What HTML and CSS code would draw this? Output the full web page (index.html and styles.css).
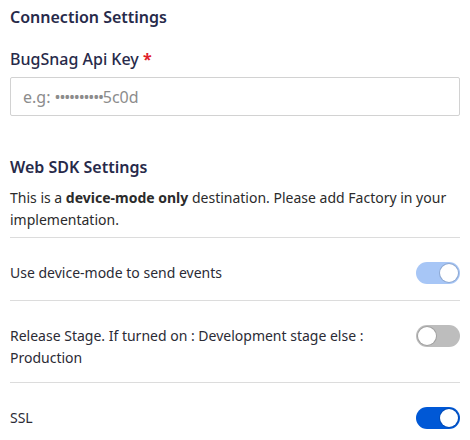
FILE: index.html
```html
<!DOCTYPE html>
<html>
<head>
<meta charset="utf-8">
<link rel="stylesheet" href="styles.css">
</head>
<body>
<div class="page">
  <h2 class="section-title">Connection Settings</h2>
  <div class="field">
    <label class="field-label">BugSnag Api Key <span class="req">*</span></label>
    <div class="text-input" role="textbox" contenteditable="true"><span class="ph">e.g: <span class="dots">••••••••••</span>5c0d</span></div>
  </div>
  <h2 class="section-title sdk">Web SDK Settings</h2>
  <p class="note">This is a <b>device-mode only</b> destination. Please add Factory in your implementation.</p>
  <div class="row">
    <span class="row-label">Use device-mode to send events</span>
    <span class="toggle on disabled"><span class="knob"></span></span>
  </div>
  <div class="row tall">
    <span class="row-label">Release Stage. If turned on : Development stage else : Production</span>
    <span class="toggle"><span class="knob"></span></span>
  </div>
  <div class="row">
    <span class="row-label">SSL</span>
    <span class="toggle on"><span class="knob"></span></span>
  </div>
</div>
</body>
</html>
```
FILE: styles.css
```css
* { box-sizing: border-box; }
html, body { margin: 0; padding: 0; background: #fff; }
body { font-family: "Noto Sans", "Open Sans", sans-serif; color: #2b2b35; }
.page { padding: 5px 10px 0 10px; width: 470px; }
.section-title {
  margin: 0;
  font-size: 16px;
  line-height: 24px;
  font-weight: 600;
  color: #272a4a;
}
.field { margin-top: 18px; }
.field-label {
  display: block;
  font-size: 16px;
  line-height: 24px;
  font-weight: 500;
  color: #272a4a;
}
.req { color: #e0202a; font-weight: 700; }
.text-input {
  display: flex;
  align-items: center;
  margin-top: 6px;
  width: 450px;
  height: 39px;
  border: 1px solid #d2d2d2;
  border-radius: 2px;
  padding: 0 12px;
  font-size: 16px;
  color: #333;
  outline: none;
}
.ph { color: #8c8c8c; white-space: nowrap; }
.dots { letter-spacing: -1.2px; }
.sdk { margin-top: 39px; }
.note {
  margin: 8px 0 0 0;
  font-size: 14px;
  line-height: 22px;
  color: #2b2b2b;
  padding-bottom: 6px;
  border-bottom: 1px solid #dcdcdc;
}
.note b { font-weight: 700; }
.row {
  display: flex;
  align-items: flex-start;
  justify-content: space-between;
  height: 63px;
  padding-top: 24px;
  border-bottom: 1px solid #dcdcdc;
}
.row.tall { height: 82px; }
.row:last-child { border-bottom: none; }
.row-label {
  font-size: 14px;
  line-height: 22px;
  color: #2b2b35;
  max-width: 360px;
}
.toggle {
  position: relative;
  flex: none;
  width: 44px;
  height: 22px;
  border-radius: 11px;
  background: #bdbdbd;
}
.toggle.on { background: #0058d6; }
.toggle.on.disabled { background: #a7c6f6; }
.knob {
  position: absolute;
  top: 2px;
  left: 2px;
  width: 18px;
  height: 18px;
  border-radius: 50%;
  background: #fff;
  box-shadow: 0 0 0 1px rgba(0,0,0,0.15);
}
.toggle.on .knob { left: 24px; }
```
